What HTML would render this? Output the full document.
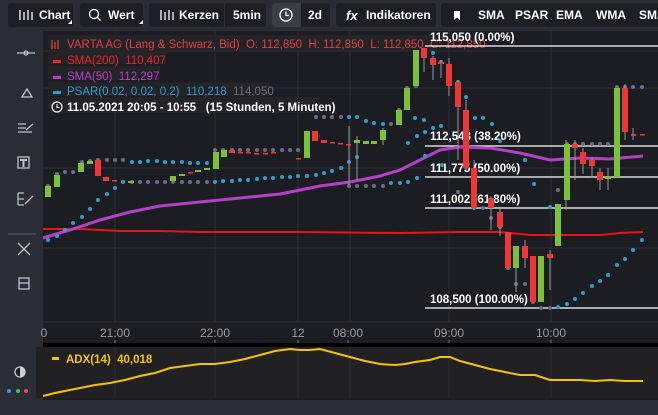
<!DOCTYPE html>
<html><head><meta charset="utf-8"><style>
*{margin:0;padding:0;box-sizing:border-box}
body{width:658px;height:415px;overflow:hidden;background:#1b1d22;font-family:"Liberation Sans",sans-serif;position:relative}
.tb{position:absolute;left:0;top:0;width:658px;height:31px;background:#2a2d33}
.b{position:absolute;top:3px;height:24px;background:#1c1f24;border-radius:3px;color:#fff;font-size:12px;font-weight:bold;line-height:24px;white-space:nowrap}
.side{position:absolute;left:0;top:31px;width:43px;height:369px;background:#2a2d33}
.bot{position:absolute;left:0;top:400px;width:658px;height:15px;background:#2a2d33}
svg{position:absolute;left:0;top:0}
svg text{white-space:pre}
</style></head><body>
<div class="tb"></div>
<div class="b" style="left:8px;width:65px;padding-left:31px">Chart</div>
<div class="b" style="left:80px;width:63px;padding-left:28px">Wert</div>
<div class="b" style="left:149px;width:117px;padding-left:30px">Kerzen<span style="position:absolute;left:75px;top:0;height:24px;border-left:1px solid #2a2d33;padding-left:8px">5min</span></div>
<div class="b" style="left:272px;width:58px;background:#1c1f24"><span style="position:absolute;left:0;top:0;width:29px;height:24px;background:#3a3e45;border-radius:3px 0 0 3px"></span><span style="position:absolute;left:36px">2d</span></div>
<div class="b" style="left:336px;width:100px;padding-left:30px">Indikatoren</div>
<div class="b" style="left:441px;width:230px;"><span style="position:absolute;left:37px">SMA</span><span style="position:absolute;left:74px">PSAR</span><span style="position:absolute;left:115px">EMA</span><span style="position:absolute;left:155px">WMA</span><span style="position:absolute;left:198px">SMA</span></div>
<div class="side"></div>
<div class="bot"></div>
<svg width="658" height="415" viewBox="0 0 658 415" font-family="Liberation Sans, sans-serif">
<g stroke="#fff" stroke-width="1.3" fill="none">
<path d="M20 10v10M24 12v8M28 10v10M32 12v8"/>
<circle cx="94" cy="14" r="4.5"/><path d="M97.5 17.5l3 3"/>
<path d="M161 10v10M165 12v8M169 10v10M173 12v8"/>
<circle cx="286" cy="15" r="6"/><path d="M286 11.5v4h3"/>
</g>
<text x="346" y="20" fill="#fff" font-size="13" font-style="italic" font-weight="bold">fx</text>
<path d="M454 11h6v9l-3-2.5-3 2.5z" fill="#fff"/>
<path d="M68 24l4-4v4z M139 24l4-4v4z" fill="#fff"/>
<g stroke="#2c2f36" stroke-width="1">
<path d="M43 51H658M43 88H658M43 168H658M43 248H658"/>
<path d="M115 31V322M215 31V322M298 31V322M350 31V322M449 31V322M551 31V322"/>
</g>
<rect x="43" y="322" width="615" height="21" fill="#1b1d22"/>
<path d="M43 322H658" stroke="#2c2f36"/>
<g fill="#9a9da3" font-size="12" text-anchor="middle">
<text x="44" y="337">0</text><text x="115" y="337">21:00</text><text x="215" y="337">22:00</text><text x="298" y="337">12</text><text x="348" y="337">08:00</text><text x="449" y="337">09:00</text><text x="551" y="337">10:00</text>
</g>
<path d="M115 340v3M215 340v3M298 340v3M348 340v3M449 340v3M551 340v3" stroke="#777"/>
<rect x="43" y="343" width="615" height="4" fill="#000"/>
<rect x="36" y="347" width="622" height="51" fill="#212123"/>
<path d="M115 347V398M215 347V398M298 347V398M350 347V398M449 347V398M551 347V398" stroke="#2c2d30"/>
<g stroke="#b8c4d6" stroke-width="1.3" fill="none">
<path d="M17 53h18"/><circle cx="26" cy="53" r="2"/>
<path d="M22 97l5-8 5 8z"/>
<path d="M18 124h8M18 128h8M18 132h14M26 130l7-6"/>
<rect x="18" y="157" width="11" height="11"/><path d="M20 160h7M23.5 160v7" stroke-width="2"/>
<path d="M18 193h6M18 199h6M18 205h6M18 193v12M25 204l8-8"/>
<path d="M8 234h28" stroke="#555a63"/>
<path d="M18 243l12 12M30 243l-12 12"/>
<rect x="19" y="278" width="10" height="11"/><path d="M19 283h10"/>
</g>
<circle cx="20" cy="372" r="5" fill="#1b1d22" stroke="#ccd" stroke-width="1.3"/><path d="M20 367a5 5 0 0 1 0 10z" fill="#ccd"/>
<circle cx="9" cy="391" r="2" fill="#3a8fe6"/><circle cx="18" cy="391" r="2" fill="#2fc56a"/><circle cx="26" cy="391" r="2" fill="#e84a5a"/>
<rect x="48" y="35" width="390" height="15" fill="#242428"/>
<rect x="48" y="50" width="118" height="14" fill="#242428"/>
<rect x="48" y="66" width="112" height="14" fill="#242428"/>
<rect x="48" y="82" width="222" height="14" fill="#242428"/>
<rect x="48" y="97" width="272" height="16" fill="#242428"/>
<g stroke="#e04040" stroke-width="1.2"><path d="M52 40v9M55 42v7M58 40v9"/></g>
<text x="67" y="48" fill="#e04040" font-size="11.5" xml:space="preserve">VARTA AG (Lang &amp; Schwarz, Bid)  O: 112,850  H: 112,850  L: 112,850  C: 112,850</text>
<rect x="53" y="60" width="8" height="3" fill="#e8252a"/><text x="67" y="64" fill="#e8252a" font-size="11.5" xml:space="preserve">SMA(200)  110,407</text>
<rect x="53" y="76" width="8" height="3" fill="#b440c8"/><text x="67" y="80" fill="#b440c8" font-size="11.5" xml:space="preserve">SMA(50)  112,297</text>
<rect x="53" y="91" width="8" height="3" fill="#28a0d0"/><text x="67" y="95" fill="#28a0d0" font-size="11.5" xml:space="preserve">PSAR(0.02, 0.02, 0.2)  110,218  <tspan fill="#6e6b86">114,050</tspan></text>
<circle cx="57" cy="107" r="5" fill="none" stroke="#fff" stroke-width="1.2"/><path d="M57 104v3.5h2.5" stroke="#fff" fill="none"/>
<text x="67" y="111" fill="#fff" font-size="11.5" font-weight="bold" xml:space="preserve">11.05.2021 20:05 - 10:55   (15 Stunden, 5 Minuten)</text>
<g stroke="#fff" stroke-width="1.3"><path d="M425 46H658M425 146H658M425 177H658M425 208H658M425 308H658"/></g>
<g fill="#fff" font-size="11.5" font-weight="bold"><text x="430" y="41">115,050 (0.00%)</text><text x="430" y="140">112,548 (38.20%)</text><text x="430" y="172">111,775 (50.00%)</text><text x="430" y="203">111,002 (61.80%)</text><text x="430" y="303">108,500 (100.00%)</text></g>
<path d="M43 229L80 229L120 231L160 231L200 232L240 232L300 232L400 233L460 232L500 232L530 235L570 235L600 235L620 233L643 232" stroke="#e8141a" stroke-width="2" fill="none"/>
<path d="M43 238L70 230L100 220L130 212L160 206L200 202L240 198L280 194L300 190L320 186L350 182L380 176L400 170L420 160L440 150L460 147L490 148L520 153L550 160L580 158L610 159L643 156" stroke="#b440c8" stroke-width="3" fill="none"/>
<g fill="#28a0d0">
<circle cx="48" cy="240" r="2"/><circle cx="57" cy="236" r="2"/><circle cx="65" cy="230" r="2"/><circle cx="73" cy="223" r="2"/><circle cx="82" cy="217" r="2"/><circle cx="90" cy="209" r="2"/><circle cx="98" cy="200" r="2"/><circle cx="107" cy="194" r="2"/><circle cx="115" cy="188" r="2"/><circle cx="123" cy="182" r="2"/>
<circle cx="132" cy="162" r="2"/><circle cx="140" cy="162" r="2"/><circle cx="148" cy="161" r="2"/><circle cx="157" cy="161" r="2"/><circle cx="165" cy="162" r="2"/><circle cx="173" cy="162" r="2"/><circle cx="182" cy="162" r="2"/><circle cx="190" cy="163" r="2"/><circle cx="198" cy="163" r="2"/><circle cx="207" cy="163" r="2"/>
<circle cx="215" cy="182" r="2"/><circle cx="223" cy="181" r="2"/><circle cx="232" cy="181" r="2"/><circle cx="240" cy="180" r="2"/><circle cx="248" cy="180" r="2"/><circle cx="257" cy="179" r="2"/><circle cx="265" cy="178" r="2"/><circle cx="273" cy="178" r="2"/><circle cx="282" cy="177" r="2"/><circle cx="290" cy="177" r="2"/><circle cx="298" cy="176" r="2"/><circle cx="307" cy="176" r="2"/><circle cx="316" cy="175" r="2"/><circle cx="324" cy="173" r="2"/><circle cx="332" cy="171" r="2"/><circle cx="341" cy="168" r="2"/><circle cx="349" cy="162" r="2"/><circle cx="357" cy="157" r="2"/>
<circle cx="349" cy="117" r="2"/><circle cx="357" cy="117" r="2"/><circle cx="366" cy="121" r="2"/><circle cx="374" cy="123" r="2"/><circle cx="383" cy="124" r="2"/>
<circle cx="415" cy="118" r="2"/><circle cx="424" cy="120" r="2"/><circle cx="433" cy="53" r="2"/><circle cx="441" cy="62" r="2"/><circle cx="449" cy="72" r="2"/><circle cx="458" cy="82" r="2"/><circle cx="466" cy="97" r="2"/><circle cx="475" cy="118" r="2"/><circle cx="483" cy="118" r="2"/><circle cx="492" cy="124" r="2"/><circle cx="500" cy="141" r="2"/><circle cx="408" cy="143" r="2"/><circle cx="417" cy="136" r="2"/><circle cx="425" cy="132" r="2"/><circle cx="433" cy="128" r="2"/><circle cx="441" cy="126" r="2"/><circle cx="425" cy="156" r="2"/><circle cx="442" cy="165" r="2"/><circle cx="417" cy="178" r="2"/><circle cx="408" cy="182" r="2"/><circle cx="400" cy="183" r="2"/><circle cx="391" cy="183" r="2"/>
<circle cx="525" cy="160" r="2"/><circle cx="534" cy="184" r="2"/><circle cx="550" cy="207" r="2"/>
<circle cx="558" cy="307" r="2"/><circle cx="567" cy="304" r="2"/><circle cx="575" cy="299" r="2"/><circle cx="583" cy="293" r="2"/><circle cx="592" cy="286" r="2"/><circle cx="600" cy="281" r="2"/><circle cx="608" cy="275" r="2"/><circle cx="617" cy="265" r="2"/><circle cx="625" cy="259" r="2"/><circle cx="633" cy="250" r="2"/><circle cx="642" cy="240" r="2"/>
</g>
<g fill="#6e6b86">
<circle cx="48" cy="186" r="2"/><circle cx="57" cy="174" r="2"/><circle cx="65" cy="172" r="2"/><circle cx="73" cy="172" r="2"/><circle cx="82" cy="162" r="2"/><circle cx="90" cy="161" r="2"/><circle cx="98" cy="160" r="2"/><circle cx="107" cy="160" r="2"/><circle cx="115" cy="160" r="2"/><circle cx="123" cy="160" r="2"/>
<circle cx="132" cy="182" r="2"/><circle cx="140" cy="182" r="2"/><circle cx="148" cy="182" r="2"/><circle cx="157" cy="182" r="2"/><circle cx="165" cy="182" r="2"/><circle cx="173" cy="182" r="2"/><circle cx="182" cy="182" r="2"/><circle cx="190" cy="182" r="2"/><circle cx="198" cy="182" r="2"/><circle cx="207" cy="182" r="2"/>
<circle cx="215" cy="150" r="2"/><circle cx="223" cy="150" r="2"/><circle cx="232" cy="150" r="2"/><circle cx="240" cy="150" r="2"/><circle cx="248" cy="150" r="2"/><circle cx="257" cy="150" r="2"/><circle cx="265" cy="150" r="2"/><circle cx="273" cy="150" r="2"/><circle cx="282" cy="150" r="2"/><circle cx="290" cy="150" r="2"/><circle cx="298" cy="150" r="2"/>
<circle cx="316" cy="117" r="2"/><circle cx="324" cy="117" r="2"/><circle cx="332" cy="117" r="2"/><circle cx="341" cy="117" r="2"/>
<circle cx="349" cy="186" r="2"/><circle cx="357" cy="186" r="2"/><circle cx="366" cy="186" r="2"/><circle cx="374" cy="186" r="2"/><circle cx="383" cy="186" r="2"/><circle cx="391" cy="124" r="2"/><circle cx="399" cy="110" r="2"/><circle cx="407" cy="88" r="2"/><circle cx="416" cy="86" r="2"/>
<circle cx="458" cy="192" r="2"/><circle cx="474" cy="208" r="2"/><circle cx="483" cy="208" r="2"/><circle cx="491" cy="218" r="2"/><circle cx="500" cy="227" r="2"/><circle cx="508" cy="268" r="2"/><circle cx="516" cy="284" r="2"/><circle cx="525" cy="284" r="2"/><circle cx="533" cy="302" r="2"/><circle cx="541" cy="308" r="2"/><circle cx="550" cy="308" r="2"/><circle cx="558" cy="190" r="2"/>
<circle cx="567" cy="144" r="2"/><circle cx="575" cy="144" r="2"/><circle cx="583" cy="144" r="2"/><circle cx="592" cy="144" r="2"/><circle cx="600" cy="144" r="2"/><circle cx="608" cy="144" r="2"/><circle cx="617" cy="87" r="2"/><circle cx="625" cy="87" r="2"/><circle cx="633" cy="87" r="2"/><circle cx="642" cy="87" r="2"/>
</g>
<g stroke="#999" stroke-width="1"><path d="M349 126V185M357 136V180M383 128V145M424 48V72M433 56V80M441 60V78M449 58V96M458 80V160M466 100V170M474 160V210M491 196V230M500 208V236M516 246V292M525 240V268M550 250V290M566 140V210M575 140V180M583 148V174M592 158V178M600 168V190M608 168V190M625 84V140M633 128V140"/></g>
<g fill="#7ac136">
<rect x="45" y="186" width="6" height="11"/><rect x="54" y="175" width="6" height="12"/><rect x="78" y="163" width="6" height="9"/><rect x="87" y="161" width="6" height="3"/><rect x="128" y="181" width="6" height="2"/><rect x="170" y="176" width="6" height="5"/><rect x="179" y="174" width="6" height="2"/><rect x="195" y="170" width="6" height="2"/><rect x="204" y="168" width="6" height="2"/><rect x="213" y="152" width="6" height="17"/><rect x="221" y="150" width="6" height="7"/>
<rect x="304" y="131" width="6" height="27"/><rect x="354" y="140" width="6" height="3"/><rect x="363" y="141" width="6" height="3"/><rect x="371" y="141" width="6" height="3"/><rect x="380" y="130" width="6" height="10"/><rect x="396" y="110" width="6" height="15"/><rect x="404" y="88" width="6" height="22"/><rect x="413" y="50" width="6" height="36"/>
<rect x="513" y="246" width="6" height="22"/><rect x="538" y="256" width="6" height="46"/><rect x="555" y="204" width="6" height="42"/><rect x="564" y="144" width="6" height="56"/><rect x="605" y="176" width="6" height="3"/><rect x="614" y="88" width="6" height="89"/>
</g>
<g fill="#f03535">
<rect x="95" y="160" width="6" height="16"/><rect x="103" y="177" width="6" height="4"/><rect x="112" y="180" width="5" height="1.5"/><rect x="188" y="172" width="5" height="1.5"/>
<rect x="229" y="150" width="6" height="3"/><rect x="238" y="152" width="5" height="1.5"/><rect x="246" y="152" width="5" height="1.5"/><rect x="254" y="153" width="5" height="1.5"/><rect x="263" y="153" width="5" height="1.5"/><rect x="271" y="152" width="5" height="1.5"/><rect x="296" y="158" width="5" height="1.5"/>
<rect x="312" y="131" width="6" height="10"/><rect x="321" y="140" width="6" height="3"/><rect x="330" y="142" width="5" height="1.5"/><rect x="338" y="143" width="5" height="1.5"/><rect x="346" y="144" width="5" height="1.5"/>
<rect x="421" y="48" width="6" height="10"/><rect x="430" y="58" width="6" height="7"/><rect x="438" y="62" width="6" height="2"/><rect x="446" y="64" width="6" height="22"/><rect x="455" y="82" width="6" height="25"/><rect x="463" y="110" width="6" height="58"/><rect x="471" y="168" width="6" height="40"/><rect x="488" y="198" width="6" height="10"/><rect x="497" y="212" width="6" height="15"/><rect x="505" y="232" width="6" height="36"/><rect x="522" y="246" width="6" height="12"/><rect x="530" y="256" width="6" height="46"/><rect x="547" y="254" width="6" height="4"/>
<rect x="572" y="144" width="6" height="4"/><rect x="580" y="152" width="6" height="12"/><rect x="589" y="160" width="6" height="6"/><rect x="597" y="172" width="6" height="8"/><rect x="622" y="88" width="6" height="44"/><rect x="631" y="134" width="5" height="2"/><rect x="640" y="134" width="5" height="1.5"/>
</g>
<rect x="52" y="357" width="7" height="3" fill="#f5c400"/>
<text x="66" y="363" fill="#f5c400" font-size="11.5" font-weight="bold" xml:space="preserve">ADX(14)  40,018</text>
<path d="M43 396L55 393L65 391L80 388L95 385L110 383L125 380L140 376L155 373L170 368L185 366L200 364L215 364L230 362L245 359L260 355L275 351L290 349L300 350L310 350L320 349L335 353L350 357L365 361L380 364L395 365L405 364L415 362L430 360L440 357L450 357L460 361L475 365L490 369L505 372L520 375L535 375L550 380L565 380L580 380L595 381L610 380L625 381L643 381" stroke="#f5c400" stroke-width="2" fill="none"/>
</svg>
</body></html>
